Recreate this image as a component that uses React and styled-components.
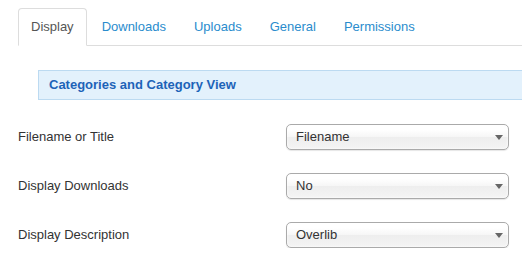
import React, { useState } from 'react';
import styled, { createGlobalStyle } from 'styled-components';

const GlobalStyle = createGlobalStyle`
  html, body {
    margin: 0;
    padding: 0;
    background: #fff;
    overflow: hidden;
  }
  body {
    font-family: "Liberation Sans", Arial, sans-serif;
    font-size: 13px;
    color: #333;
  }
`;

const Page = styled.div`
  padding: 8px 0 0 18px;
`;

const TabBar = styled.ul`
  display: flex;
  list-style: none;
  margin: 0;
  padding: 0;
  border-bottom: 1px solid #ddd;
`;

const Tab = styled.li`
  margin-right: 2px;
  margin-bottom: -1px;
  padding: 8px 12px;
  line-height: 20px;
  border: 1px solid ${(props) => (props.active ? '#ddd' : 'transparent')};
  border-bottom-color: ${(props) => (props.active ? 'transparent' : 'transparent')};
  border-radius: 4px 4px 0 0;
  background: ${(props) => (props.active ? '#fff' : 'transparent')};
  color: ${(props) => (props.active ? '#555' : '#2a8ccd')};
  cursor: pointer;
`;

const Content = styled.div`
  padding-top: 24px;
`;

const SectionHeader = styled.div`
  margin: 0 -20px 24px 20px;
  height: 28px;
  line-height: 28px;
  padding-left: 10px;
  background: #e3f1fc;
  border: 1px solid #bcdaf1;
  color: #1d63b8;
  font-weight: bold;
`;

const Form = styled.div`
  display: flex;
  flex-direction: column;
  gap: 23px;
`;

const Row = styled.div`
  display: grid;
  grid-template-columns: 268px 223px;
  align-items: center;
`;

const Label = styled.label`
  color: #333;
  line-height: 18px;
`;

const Select = styled.div`
  position: relative;
  box-sizing: border-box;
  height: 26px;
  line-height: 24px;
  padding-left: 9px;
  border: 1px solid #aaa;
  border-radius: 5px;
  background: linear-gradient(#fff 20%, #f6f6f6 50%, #eee 52%, #f4f4f4 100%);
  box-shadow: inset 0 0 3px #fff, 0 1px 1px rgba(0, 0, 0, 0.1);
  color: #333;
  cursor: pointer;
`;

const Arrow = styled.svg`
  position: absolute;
  right: 5px;
  top: 10px;
`;

const tabs = ['Display', 'Downloads', 'Uploads', 'General', 'Permissions'];

const fields = [
  { label: 'Filename or Title', value: 'Filename' },
  { label: 'Display Downloads', value: 'No' },
  { label: 'Display Description', value: 'Overlib' },
];

const App = () => {
  const [active, setActive] = useState('Display');

  return (
    <Page>
      <GlobalStyle />
      <TabBar>
        {tabs.map((t) => (
          <Tab key={t} active={t === active} onClick={() => setActive(t)}>
            {t}
          </Tab>
        ))}
      </TabBar>
      <Content>
        <SectionHeader>Categories and Category View</SectionHeader>
        <Form>
          {fields.map((f) => (
            <Row key={f.label}>
              <Label>{f.label}</Label>
              <Select>
                {f.value}
                <Arrow width="8" height="5" viewBox="0 0 8 5">
                  <path d="M0 0 H8 L4 5 Z" fill="#666" />
                </Arrow>
              </Select>
            </Row>
          ))}
        </Form>
      </Content>
    </Page>
  );
};

export default App;
